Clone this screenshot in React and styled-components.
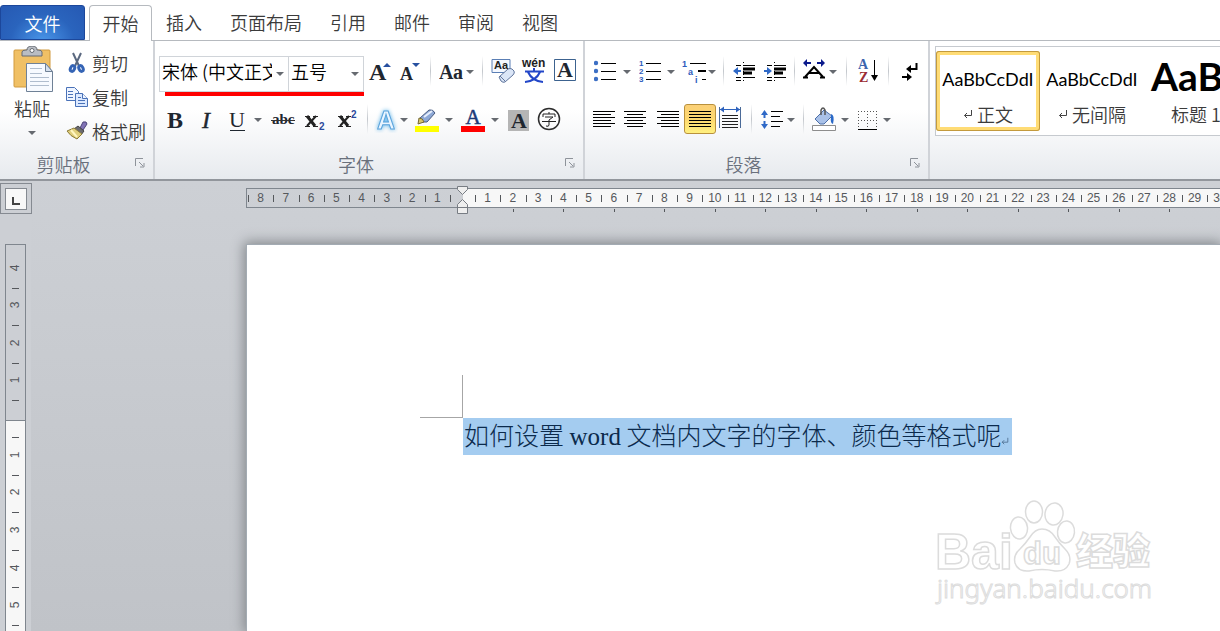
import React from 'react'
import styled, { createGlobalStyle, css } from 'styled-components'

const tabs = ['插入', '页面布局', '引用', '邮件', '审阅', '视图']
const leftUnits = [8, 7, 6, 5, 4, 3, 2, 1]
const rightUnits = Array.from({ length: 40 }, (_, i) => i + 1)
const stops = Array.from({ length: 20 }, (_, i) => i)

export default function App() {
  return (
    <Window>
      <GlobalStyle />
      <TabBar>
        <FileTab type="button">文件</FileTab>
        <ActiveTab type="button">开始</ActiveTab>
        {tabs.map((name) => (
          <Tab type="button" key={name}>
            {name}
          </Tab>
        ))}
      </TabBar>
      <Ribbon>
        <ClipboardGroup />
        <FontGroup />
        <ParagraphGroup />
        <StylesGroup />
      </Ribbon>
      <Workspace>
        <Sidebar>
          <TabSelector type="button" aria-label="制表符">
            <TabGlyph>
              <svg width="8" height="8">
                <path d="M1 0V7H8" fill="none" stroke="#444" strokeWidth="2" />
              </svg>
            </TabGlyph>
          </TabSelector>
          <VerticalRuler />
        </Sidebar>
        <Main>
          <HorizontalRuler />
          <Page>
            <CropMark />
            <Paragraph>
              <Selection>
                如何设置 <Latin>word</Latin> 文档内文字的字体、颜色等格式呢
                <ReturnMark size={8} color="#47688a" />
              </Selection>
            </Paragraph>
            <Watermark />
          </Page>
        </Main>
      </Workspace>
    </Window>
  )
}

function ClipboardGroup() {
  return (
    <Group $width={155}>
      <ClipboardBody>
        <PasteButton type="button">
          <PasteIcon />
          <span>粘贴</span>
          <Caret />
        </PasteButton>
        <CommandList>
          <Command type="button">
            <CutIcon />
            剪切
          </Command>
          <Command type="button">
            <CopyIcon />
            复制
          </Command>
          <Command type="button">
            <BrushIcon />
            格式刷
          </Command>
        </CommandList>
      </ClipboardBody>
      <GroupFooter title="剪贴板" />
    </Group>
  )
}

function FontGroup() {
  return (
    <Group $width={430}>
      <GroupBody>
        <ToolRow>
          <FontPickers>
            <Picker $width={130}>
              <select aria-label="字体">
                <option>宋体 (中文正文)</option>
              </select>
              <Caret />
            </Picker>
            <Picker $width={76}>
              <select aria-label="字号">
                <option>五号</option>
              </select>
              <Caret />
            </Picker>
          </FontPickers>
          <Tool $width={31} aria-label="增大字体">
            <Icon>
              <Glyph x="1" y="23" size="24">A</Glyph>
              <path d="M15 10l4-4 4 4z" fill="#2750a0" />
            </Icon>
          </Tool>
          <Tool $width={30} aria-label="缩小字体">
            <Icon>
              <Glyph x="2" y="23" size="18">A</Glyph>
              <path d="M14 6h8l-4 4z" fill="#2750a0" />
            </Icon>
          </Tool>
          <Separator $width={10} />
          <Tool $width={43} $gap={3} aria-label="更改大小写">
            <Icon>
              <Glyph x="0" y="22" size="20">A</Glyph>
              <Glyph x="14" y="22" size="20">a</Glyph>
            </Icon>
            <Caret />
          </Tool>
          <Separator $width={9} />
          <Tool $width={31} aria-label="清除格式">
            <Icon>
              <path d="M1 2.500h18v13H1z" fill="#f4f8ff" stroke="#5b7fb5" />
              <text x="3" y="12" fontSize="11" fontWeight="bold" fontFamily="Liberation Sans, sans-serif" fill="#222">
                Aa
              </text>
              <path d="M8 20l9-8q2-1 4 0l2 2q1 2-1 4l-8 7q-2 1-4-1z" fill="#dbe6f7" stroke="#60759c" />
              <path d="M9 19l5 5" stroke="#60759c" />
            </Icon>
          </Tool>
          <Tool $width={31} aria-label="拼音指南">
            <Icon w={26}>
              <text x="1" y="10" fontSize="12" fontWeight="bold" fontFamily="Liberation Sans, sans-serif" fill="#222">
                wén
              </text>
              <path d="M13 11v4M4 14.500h19M7 15q4 9 15 10M19 15q-4 9-15 10" fill="none" stroke="#2246c8" strokeWidth="2" />
            </Icon>
          </Tool>
          <Tool $width={32} aria-label="字符边框">
            <Icon>
              <path d="M1.500 2.500h21v21h-21z" fill="#fff" stroke="#3c628f" strokeWidth="1" />
              <Glyph x="4" y="20" size="22">A</Glyph>
            </Icon>
          </Tool>
        </ToolRow>
        <ToolRow $second>
          <Tool $width={32} aria-label="加粗">
            <Icon w={18}>
              <Glyph x="1" y="23" size="24">B</Glyph>
            </Icon>
          </Tool>
          <Tool $width={31} aria-label="倾斜">
            <Icon w={14}>
              <Glyph x="2" y="23" size="24" italic weight="normal">I</Glyph>
            </Icon>
          </Tool>
          <Tool $width={47} $gap={9} aria-label="下划线">
            <Icon w={16}>
              <Glyph x="0" y="22" size="22" weight="normal">U</Glyph>
              <path d="M1 25.500h15" stroke="#1f2730" />
            </Icon>
            <Caret />
          </Tool>
          <Tool $width={28} aria-label="删除线">
            <Icon>
              <Glyph x="1" y="19" size="15">abc</Glyph>
              <path d="M0 15.500h24" stroke="#333" />
            </Icon>
          </Tool>
          <Tool $width={32} aria-label="下标">
            <Icon>
              <CrossMark />
              <Small x="18" y="25">2</Small>
            </Icon>
          </Tool>
          <Tool $width={34} aria-label="上标">
            <Icon>
              <CrossMark />
              <Small x="17" y="13">2</Small>
            </Icon>
          </Tool>
          <Separator $width={8} />
          <Tool $width={40} $gap={2} aria-label="文本效果">
            <Icon>
              <GlowLetter x="12" y="24">A</GlowLetter>
            </Icon>
            <Caret />
          </Tool>
          <Tool $width={46} $gap={6} aria-label="突出显示">
            <Icon>
              <path d="M0 21h24v6H0z" fill="#ff0" />
              <path d="M4 17l1-4 9-8q4-1 6 3l-8 9z" fill="#8da8d6" stroke="#4a5c80" />
              <path d="M9 12l8-6" stroke="#e6eefc" strokeWidth="2" />
              <path d="M3 19l1-6q4 0 5 4z" fill="#d9c56a" stroke="#766a35" />
            </Icon>
            <Caret />
          </Tool>
          <Tool $width={45} $gap={6} aria-label="字体颜色">
            <Icon>
              <path d="M0 21h24v6H0z" fill="#f00" />
              <text x="12" y="19" textAnchor="middle" fontSize="21" fontFamily="Liberation Serif, serif" fill="#1c3a78" stroke="#1c3a78" strokeWidth=".5">
                A
              </text>
            </Icon>
            <Caret />
          </Tool>
          <Tool $width={33} aria-label="字符底纹">
            <Icon w={22}>
              <path d="M0 5h21v21H0z" fill="#b5b5b5" />
              <Glyph x="3" y="23" size="22">A</Glyph>
            </Icon>
          </Tool>
          <Tool $width={27} aria-label="带圈字符">
            <Icon>
              <circle cx="12" cy="14" r="10.500" fill="none" stroke="#2d2d2d" strokeWidth="1.500" />
              <path d="M12 7v2M6 12v-3h12v3M8 12h8l-4 3v5q0 2-3 1M5 16.500h14" fill="none" stroke="#222" />
            </Icon>
          </Tool>
        </ToolRow>
      </GroupBody>
      <GroupFooter title="字体" />
    </Group>
  )
}

function ParagraphGroup() {
  return (
    <Group $width={345}>
      <GroupBody>
        <ToolRow>
          <Tool $width={46} $gap={7} aria-label="项目符号">
            <Icon w={22}>
              {[6, 14, 22].map((y) => (
                <g key={y}>
                  <circle cx="2" cy={y} r="2.200" fill="#3c6fc4" />
                  <path d={`M7 ${y + 0.5}h15`} stroke="#000" />
                </g>
              ))}
            </Icon>
            <Caret />
          </Tool>
          <Tool $width={43} $gap={6} aria-label="编号">
            <Icon w={22}>
              {[6, 14, 22].map((y, i) => (
                <g key={y}>
                  <text x="0" y={y + 3} fontSize="8" fontWeight="bold" fontFamily="Liberation Sans, sans-serif" fill="#2d5bbd">
                    {i + 1}
                  </text>
                  <path d={`M7 ${y + 0.5}h15`} stroke="#000" />
                </g>
              ))}
            </Icon>
            <Caret />
          </Tool>
          <Tool $width={41} $gap={1} aria-label="多级列表">
            <Icon w={25}>
              <g fontSize="9" fontWeight="bold" fontFamily="Liberation Sans, sans-serif" fill="#2d5bbd">
                <text x="0" y="10">1</text>
                <text x="6" y="18">a</text>
                <text x="13" y="26">i</text>
              </g>
              <path d="M8 6.500h16M20 22.500h4" stroke="#000" />
              <path d="M16 14h8" stroke="#000" strokeWidth="2" />
            </Icon>
            <Caret />
          </Tool>
          <Separator $width={9} />
          <Tool $width={32} aria-label="减少缩进量">
            <Icon w={22}>
              <IndentLines />
              <path d="M0 14l5-4v3h3v2H5v3z" fill="#2f69c7" />
            </Icon>
          </Tool>
          <Tool $width={29} aria-label="增加缩进量">
            <Icon w={22}>
              <IndentLines />
              <path d="M8 14l-5-4v3H0v2h3v3z" fill="#2f69c7" />
            </Icon>
          </Tool>
          <Separator $width={10} />
          <Tool $width={42} $gap={4} aria-label="中文版式">
            <Icon w={22}>
              <path d="M0 6l4-4v3h4v2H4v3zM22 6l-4-4v3h-4v2h4v3z" fill="#0b1a8c" />
              <path d="M0 20.500h5M17 20.500h5M2 20L11 10L20 20M6 16h10" fill="none" stroke="#000" strokeWidth="2" />
            </Icon>
            <Caret />
          </Tool>
          <Separator $width={11} />
          <Tool $width={31} aria-label="排序">
            <Icon w={20}>
              <g fontSize="14" fontWeight="bold" fontFamily="Liberation Serif, serif">
                <text x="0" y="12" fill="#3c64ae">A</text>
                <text x="1" y="25" fill="#9b2c33">Z</text>
              </g>
              <path d="M16.500 3v18" stroke="#000" />
              <path d="M13 18h7l-3.500 6z" />
            </Icon>
          </Tool>
          <Separator $width={11} />
          <Tool $width={32} aria-label="显示编辑标记">
            <Icon w={16}>
              <path d="M14.500 6v6h-7" fill="none" stroke="#000" strokeWidth="2" />
              <path d="M4 12l5-4v8zM10 20l-5-4v8z" />
              <path d="M0 20h7" stroke="#000" strokeWidth="2" />
            </Icon>
          </Tool>
        </ToolRow>
        <ToolRow $second>
          <Tool $width={30} aria-label="左对齐">
            <AlignIcon d="M0 6.500h22M0 9.500h18M0 12.500h22M0 15.500h18M0 18.500h22M0 21.500h18" />
          </Tool>
          <Tool $width={32} aria-label="居中">
            <AlignIcon d="M0 6.500h22M3 9.500h16M0 12.500h22M3 15.500h16M0 18.500h22M3 21.500h16" />
          </Tool>
          <Tool $width={33} aria-label="右对齐">
            <AlignIcon d="M0 6.500h22M4 9.500h18M0 12.500h22M4 15.500h18M0 18.500h22M4 21.500h18" />
          </Tool>
          <Tool $width={32} $active aria-label="两端对齐" aria-pressed="true">
            <AlignIcon d="M0 6.500h22M0 9.500h22M0 12.500h22M0 15.500h22M0 18.500h22M0 21.500h22" />
          </Tool>
          <Tool $width={28} aria-label="分散对齐">
            <Icon w={22}>
              <path d="M.5 2v21M21.500 2v21" stroke="#4a6a98" />
              <path d="M3 10.500h16M3 13.500h16M3 16.500h16M3 19.500h16M3 22.500h16" stroke="#222" />
              <path d="M1 4.500h20" stroke="#2d62bd" />
              <path d="M1 4.500l4-3v6zM21 4.500l-4-3v6z" fill="#2d62bd" />
            </Icon>
          </Tool>
          <Separator $width={14} />
          <Tool $width={39} $gap={4} aria-label="行距">
            <Icon w={22}>
              <path d="M10 6.500h12M10 11.500h9M10 16.500h12M10 21.500h9" stroke="#000" />
              <path d="M3.500 5l3.500 5H4.500v3h-2v-3H0zM3.500 24L0 19h2.500v-3h2v3H7z" fill="#2f69c7" />
            </Icon>
            <Caret />
          </Tool>
          <Separator $width={12} />
          <Tool $width={43} $gap={5} aria-label="底纹">
            <Icon>
              <path d="M.5 20.500h23v5H.5z" fill="#fff" stroke="#8d8d8d" />
              <path d="M3 14l9-9 8 6-8 8H8z" fill="#a9c1e8" stroke="#4b6ea8" />
              <path d="M19 9q4 1 2 10-3-1-2-7z" fill="#2868c8" />
              <path d="M9 10V5q2-4 4 0v5" fill="none" stroke="#555" strokeWidth="1.500" />
            </Icon>
            <Caret />
          </Tool>
          <Tool $width={45} $gap={5} aria-label="边框">
            <Icon w={20}>
              <path d="M.5 6v18M9.500 6v18M18.500 6v18M0 6.500h20M0 15.500h20" stroke="#555" strokeDasharray="1 2" />
              <path d="M0 24.500h19" stroke="#000" />
            </Icon>
            <Caret />
          </Tool>
        </ToolRow>
      </GroupBody>
      <GroupFooter title="段落" />
    </Group>
  )
}

function StylesGroup() {
  return (
    <StylesArea>
      <Gallery>
        <StyleCard type="button" $selected>
          <Sample>AaBbCcDdI</Sample>
          <StyleName>
            <ReturnMark size={10} color="#444" /> 正文
          </StyleName>
        </StyleCard>
        <StyleCard type="button">
          <Sample>AaBbCcDdI</Sample>
          <StyleName>
            <ReturnMark size={10} color="#444" /> 无间隔
          </StyleName>
        </StyleCard>
        <StyleCard type="button">
          <Sample $heading>AaBb</Sample>
          <StyleName>标题 1</StyleName>
        </StyleCard>
      </Gallery>
    </StylesArea>
  )
}

function GroupFooter({ title }) {
  return (
    <Footer>
      <span>{title}</span>
      <Launcher type="button" aria-label={title}>
        <svg width="10" height="10" fill="none" stroke="#8e939a">
          <path d="M.5 8V.5H8M4 4l4 4M9 5v4H5" />
        </svg>
      </Launcher>
    </Footer>
  )
}

function HorizontalRuler() {
  return (
    <RulerArea>
      <RulerTrack>
        <RulerMargin>
          <Scale $count={8} $width={202}>
            {leftUnits.map((n) => (
              <Unit key={n}>{n}</Unit>
            ))}
          </Scale>
          <Unit $half />
        </RulerMargin>
        <RulerText>
          <Scale $count={40} $width={1010}>
            {rightUnits.map((n) => (
              <Unit key={n}>{n}</Unit>
            ))}
          </Scale>
        </RulerText>
      </RulerTrack>
      <Stops>
        {stops.map((n) => (
          <i key={n} />
        ))}
      </Stops>
      <IndentMarker width="13" height="30" fill="#eee" stroke="#777c83">
        <path d="M1.500 1.500h10v3l-5 5-5-5z" />
        <path d="M6.500 14.500l5 5v9h-10v-9zM1.500 22.500h10" />
      </IndentMarker>
    </RulerArea>
  )
}

function VerticalRuler() {
  return (
    <VRuler>
      <VMargin>
        <VScale $count={4} $height={150}>
          {[4, 3, 2, 1].map((n) => (
            <VUnit key={n}>
              <span>{n}</span>
            </VUnit>
          ))}
        </VScale>
      </VMargin>
      <VText>
        <VUnit $half />
        <VScale $count={5} $height={188}>
          {[1, 2, 3, 4, 5].map((n) => (
            <VUnit key={n}>
              <span>{n}</span>
            </VUnit>
          ))}
        </VScale>
      </VText>
    </VRuler>
  )
}

function Watermark() {
  return (
    <WatermarkArt width="226" height="112" viewBox="0 0 226 112">
      <g fill="#fff" stroke="#dcdcdc" strokeWidth="1.500">
        <text x="3" y="74" fontSize="50" fontWeight="bold" fontFamily="Liberation Sans, sans-serif">
          Bai
        </text>
        <ellipse cx="87" cy="33" rx="8.500" ry="11" transform="rotate(-6 87 33)" />
        <ellipse cx="102" cy="17" rx="8.500" ry="11" />
        <ellipse cx="122" cy="19" rx="9" ry="11" transform="rotate(8 122 19)" />
        <ellipse cx="134" cy="37" rx="8.500" ry="11" transform="rotate(6 134 37)" />
        <path d="M110 34q8 0 13 8 4 6 10 12 7 7 4 15-4 8-14 7-13-3-26 0-11 1-14-8-2-8 5-14 6-6 10-12 5-8 12-8z" />
        <text x="91" y="69" fontSize="31" fontWeight="bold" fontFamily="Liberation Sans, sans-serif">
          du
        </text>
        <text x="144" y="70" fontSize="37" fontWeight="900" fontFamily="Noto Sans CJK SC, sans-serif">
          经验
        </text>
        <text x="5" y="103" fontSize="26" fontFamily="Noto Sans, sans-serif" strokeWidth="1">
          jingyan.baidu.com
        </text>
      </g>
    </WatermarkArt>
  )
}

/* icons */

function Icon({ w = 24, children }) {
  return (
    <svg width={w} height="28" viewBox={`0 0 ${w} 28`} aria-hidden="true">
      {children}
    </svg>
  )
}

function AlignIcon({ d }) {
  return (
    <Icon w={22}>
      <path d={d} stroke="#000" />
    </Icon>
  )
}

function Glyph({ x, y, size, italic, weight = 'bold', children }) {
  return (
    <text
      x={x}
      y={y}
      fontSize={size}
      fontWeight={weight}
      fontStyle={italic ? 'italic' : 'normal'}
      fontFamily="Liberation Serif, serif"
      fill="#1f2730"
      stroke={italic ? '#1f2730' : 'none'}
      strokeWidth=".4"
    >
      {children}
    </text>
  )
}

function Small({ x, y, children }) {
  return (
    <text x={x} y={y} fontSize="10" fontWeight="bold" fontFamily="Liberation Sans, sans-serif" fill="#2c4a9c">
      {children}
    </text>
  )
}

function CrossMark() {
  return (
    <g stroke="#222">
      <path d="M6 11l8 10" strokeWidth="3" />
      <path d="M15 11L6 21" strokeWidth="2" />
      <path d="M4 11.500h5M12 11.500h5M4 21.500h5M12 21.500h5" />
    </g>
  )
}

function IndentLines() {
  return (
    <>
      <path d="M3 8.500h5M10 8.500h12M3 20.500h5M10 20.500h12M3 23.500h5" stroke="#000" />
      <path d="M10 12h12M10 16h9" stroke="#000" strokeWidth="3" />
      <path d="M10.500 5v21" stroke="#000" strokeDasharray="1 2" />
    </>
  )
}

function Caret() {
  return (
    <svg width="8" height="28" viewBox="0 0 8 28" aria-hidden="true">
      <path d="M0 13h8l-4 4z" fill="#666a70" />
    </svg>
  )
}

function ReturnMark({ size, color }) {
  return (
    <svg width={size} height={size} viewBox="0 0 10 10" fill="none" stroke={color} aria-hidden="true">
      <path d="M8.500 1v5.500H1.500M4 4L1.500 6.500 4 9" />
    </svg>
  )
}

function PasteIcon() {
  return (
    <svg width="46" height="48" viewBox="-4 0 46 48" aria-hidden="true">
      <rect x="1" y="4" width="36" height="37" rx="1" fill="#f0c065" stroke="#d19a3e" />
      <path d="M9 10V6q0-2 4-2h1q0-4 5-4t5 4h1q4 0 4 2v4z" fill="#b9bdc3" stroke="#666b73" />
      <circle cx="19" cy="4.500" r="2" fill="#fff" stroke="#666b73" />
      <path d="M13.500 17.500h19l7 8v20h-26z" fill="#f7faff" stroke="#6f8196" />
      <path d="M32.500 17.500v8h7z" fill="#d5dfec" stroke="#6f8196" />
      <path d="M17 22.500h12M17 27.500h12M17 31.500h19M17 35.500h19M17 39.500h19" stroke="#b0bdce" />
    </svg>
  )
}

function CutIcon() {
  return (
    <svg width="22" height="22" viewBox="0 0 22 22" aria-hidden="true">
      <path d="M7 1l6 13M15 1L9 14" stroke="#5b6980" strokeWidth="2" />
      <ellipse cx="6.500" cy="16.500" rx="2" ry="3" transform="rotate(25 6.500 16.500)" fill="#fff" stroke="#3564b5" strokeWidth="3" />
      <ellipse cx="15" cy="16.500" rx="2" ry="3" transform="rotate(-25 15 16.500)" fill="#fff" stroke="#3564b5" strokeWidth="3" />
    </svg>
  )
}

function CopyIcon() {
  return (
    <svg width="22" height="22" viewBox="0 0 22 22" fill="#eef4ff" stroke="#4a72b8" aria-hidden="true">
      <path d="M.5 1.500h8l4 4v9H.5z" />
      <path d="M2 5.500h5M2 8.500h5M2 11.500h5" />
      <path d="M9.500 7.500h7l5 5v8h-12z" fill="#dce9ff" />
      <path d="M16.500 7.500v5h5M12 11.500h3M12 14.500h7M12 17.500h7" />
    </svg>
  )
}

function BrushIcon() {
  return (
    <svg width="22" height="22" viewBox="0 0 22 22" aria-hidden="true">
      <path d="M14 8l3-6q4-1 4 2l-4 6z" fill="#8173b5" stroke="#4e4779" />
      <path d="M12 6l6 5-3 4-7-6z" fill="#6b6b70" stroke="#444" />
      <path d="M8 8l8 6-5 5Q4 16 1 11z" fill="#e0cf7c" stroke="#8b7b38" />
      <path d="M5 10l6 7" stroke="#fff6c0" strokeWidth="2" />
    </svg>
  )
}

/* styles */

const GlobalStyle = createGlobalStyle`
  * {
    box-sizing: border-box;
  }

  body {
    margin: 0;
    font-family: 'Noto Sans CJK SC', sans-serif;
    font-size: 18px;
    font-weight: 350;
    color: #3b3b3b;
  }

  button, select {
    margin: 0;
    padding: 0;
    border: 0;
    background: none;
    font: inherit;
    color: inherit;
  }

  svg {
    display: block;
    flex: none;
  }
`

const Window = styled.div`
  display: flex;
  flex-direction: column;
  height: 100vh;
  overflow: hidden;
  background: #fff;
`

const TabBar = styled.nav`
  display: flex;
  flex: none;
  padding-top: 5px;
  border-bottom: 1px solid #b6babf;
`

const Tab = styled.button`
  height: 35px;
  padding: 0 14px;
  line-height: 35px;
  white-space: nowrap;
`

const FileTab = styled(Tab)`
  width: 85px;
  margin-right: 4px;
  color: #fff;
  border: 1px solid #1c479b;
  border-radius: 3px 3px 0 0;
  background: radial-gradient(ellipse at 50% 110%, #4a97ea 0%, #2a64bd 55%, #2659b3 100%);
  line-height: 30px;
`

const ActiveTab = styled(Tab)`
  width: 63px;
  height: 36px;
  margin-bottom: -1px;
  padding: 0;
  border: 1px solid #b6babf;
  border-bottom: 0;
  border-radius: 4px 4px 0 0;
  background: #fff;
`

const Ribbon = styled.div`
  display: flex;
  flex: none;
  background: linear-gradient(#fff 50%, #e7eaee);
  border-bottom: 2px solid #92969c;
`

const Group = styled.section`
  display: flex;
  flex-direction: column;
  flex: none;
  width: ${(props) => props.$width}px;
  border-right: 2px solid #d0d3d8;
`

const GroupBody = styled.div`
  padding: 15px 0 0 4px;
`

const ToolRow = styled.div`
  display: flex;
  align-items: flex-start;
  height: ${(props) => (props.$second ? 30 : 36)}px;
  margin-top: ${(props) => (props.$second ? 12 : 0)}px;
`

const Tool = styled.button.attrs({ type: 'button' })`
  display: flex;
  align-items: center;
  justify-content: center;
  flex: none;
  gap: ${(props) => props.$gap || 0}px;
  width: ${(props) => props.$width}px;
  height: 30px;

  ${(props) =>
    props.$active &&
    css`
      border: 1px solid #b9913c;
      border-radius: 3px;
      background: linear-gradient(#fbd077, #fdd86f 50%, #fff07f);
    `}
`

const Separator = styled.span`
  flex: none;
  width: ${(props) => props.$width}px;
  height: 30px;
  background: linear-gradient(#fff0, #c3c7cc, #fff0) center / 1px 100% no-repeat;
`

const FontPickers = styled.div`
  position: relative;
  display: flex;
  width: 205px;

  &::after {
    content: '';
    position: absolute;
    left: 6px;
    right: 0;
    bottom: -4px;
    height: 4px;
    background: #f00;
  }
`

const Picker = styled.label`
  display: grid;
  width: ${(props) => props.$width}px;
  height: 36px;
  margin-right: -1px;
  border: 1px solid #d0d4d9;
  background: #fff;

  select {
    grid-area: 1 / 1;
    width: 100%;
    padding: 0 16px 6px 2px;
    appearance: none;
    color: #000;
    overflow: hidden;
    text-overflow: clip;
  }

  svg {
    grid-area: 1 / 1;
    justify-self: end;
    margin: 2px 4px 0 0;
    pointer-events: none;
  }
`

const GlowLetter = styled.text`
  font: bold 25px 'Liberation Sans', sans-serif;
  text-anchor: middle;
  fill: #eaf5ff;
  stroke: #5ba3dc;
  stroke-width: 1px;
  filter: drop-shadow(0 0 2px #5fb4e8);
`

const Footer = styled.div`
  display: flex;
  align-items: center;
  height: 28px;
  margin-top: auto;
  padding: 0 8px 2px 0;
  color: #69707c;

  span {
    flex: 1;
    padding-right: 8px;
    line-height: 26px;
    text-align: center;
  }
`

const Launcher = styled.button`
  display: flex;
  height: 12px;
`

const ClipboardBody = styled.div`
  display: flex;
  padding-top: 5px;
`

const PasteButton = styled.button`
  display: flex;
  flex-direction: column;
  align-items: center;
  width: 64px;
  height: 104px;
  line-height: 28px;

  span {
    margin-bottom: -4px;
  }
`

const CommandList = styled.div`
  display: flex;
  flex-direction: column;
`

const Command = styled.button`
  display: flex;
  align-items: center;
  gap: 4px;
  height: 34px;
  padding-left: 2px;
  white-space: nowrap;
`

const StylesArea = styled.section`
  flex: 1;
  min-width: 0;
  height: 138px;
  padding: 5px 0 0 5px;
`

const Gallery = styled.div`
  display: flex;
  height: 90px;
  padding-top: 4px;
  border: 1px solid #c6cacf;
  border-right: 0;
  background: #fff;
  overflow: hidden;
`

const StyleCard = styled.button`
  display: flex;
  flex-direction: column;
  align-items: center;
  flex: none;
  width: 104px;
  height: 80px;
  border-radius: 3px;

  ${(props) =>
    props.$selected &&
    css`
      background: #fff;
      box-shadow: inset 0 0 0 1px #c39a3d, inset 0 0 0 4px #ffdc75;
    `}
`

const Sample = styled.span`
  height: 50px;
  padding-left: ${(props) => (props.$heading ? 4 : 0)}px;
  line-height: ${(props) => (props.$heading ? 50 : 56)}px;
  font-family: Lato, sans-serif;
  font-size: ${(props) => (props.$heading ? 39 : 18)}px;
  font-weight: ${(props) => (props.$heading ? 700 : 400)};
  color: #000;
`

const StyleName = styled.span`
  display: flex;
  align-items: center;
  gap: 4px;
  line-height: 26px;
  white-space: nowrap;
`

const Workspace = styled.div`
  display: flex;
  flex: 1;
  min-height: 0;
  background: linear-gradient(#cdd0d5, #c0c3c8);
`

const Sidebar = styled.aside`
  display: flex;
  flex-direction: column;
  flex: none;
  width: 31px;
  padding-top: 2px;
  background: #cccfd4;
`

const TabSelector = styled.button`
  display: flex;
  align-items: center;
  justify-content: center;
  flex: none;
  width: 32px;
  height: 31px;
  border: 1px solid #858a91;
`

const TabGlyph = styled.span`
  display: flex;
  align-items: flex-end;
  justify-content: center;
  width: 22px;
  height: 22px;
  padding-bottom: 4px;
  border: 1px solid #858a91;
  background: #f8f8f8;
`

const Main = styled.main`
  flex: 1;
  min-width: 0;
  display: flex;
  flex-direction: column;
  overflow: hidden;
`

const RulerArea = styled.div`
  position: relative;
  flex: none;
  height: 63px;
  padding: 7px 0 0 215px;
`

const rulerFont = css`
  font-family: 'Liberation Sans', sans-serif;
  font-size: 12px;
  font-weight: 400;
  color: #55585c;
`

const RulerTrack = styled.div`
  display: flex;
  height: 20px;
  border: 1px solid #7f868e;
  border-right: 0;
  overflow: hidden;
  ${rulerFont}
`

const RulerMargin = styled.div`
  display: flex;
  justify-content: flex-end;
  flex: none;
  width: 216px;
`

const RulerText = styled.div`
  flex: 1;
  min-width: 0;
  padding-left: 12px;
  background: #f7f7f7;
`

const Scale = styled.div`
  display: grid;
  grid-template-columns: repeat(${(props) => props.$count}, 1fr);
  width: ${(props) => props.$width}px;
`

const Unit = styled.span`
  display: flex;
  align-items: center;
  justify-content: center;
  width: ${(props) => (props.$half ? '13px' : 'auto')};
  height: 18px;
  background: linear-gradient(#55585c, #55585c) left center / 1px 7px no-repeat;
`

const Stops = styled.div`
  display: grid;
  grid-template-columns: repeat(20, 1fr);
  width: 1010px;
  height: 3px;
  margin: 1px 0 0 217px;

  i {
    border-right: 1px solid #55585c;
  }
`

const IndentMarker = styled.svg`
  position: absolute;
  left: 425px;
  top: 4px;
`

const VRuler = styled.div`
  display: flex;
  flex-direction: column;
  flex: 1;
  min-height: 0;
  width: 21px;
  margin: 30px 0 0 5px;
  border: 1px solid #7f868e;
  border-bottom: 0;
  overflow: hidden;
  ${rulerFont}
`

const VMargin = styled.div`
  flex: none;
  height: 176px;
  padding-top: 6px;
  border-bottom: 1px solid #7f868e;
`

const VText = styled.div`
  flex: 1;
  background: #f7f7f7;
`

const VScale = styled.div`
  display: grid;
  grid-template-rows: repeat(${(props) => props.$count}, 1fr);
  height: ${(props) => props.$height}px;
`

const VUnit = styled.div`
  display: flex;
  align-items: center;
  justify-content: center;
  height: ${(props) => (props.$half ? '17px' : 'auto')};
  padding-bottom: 4px;
  background: linear-gradient(#55585c, #55585c) center bottom / 7px 1px no-repeat;

  span {
    transform: rotate(-90deg);
  }
`

const Page = styled.article`
  position: relative;
  flex: 1;
  margin-left: 215px;
  padding: 130px 0 0 173px;
  border: 1px solid #a3abb3;
  border-right: 0;
  border-bottom: 0;
  background: #fff;
  box-shadow: 0 0 12px 2px #84888c;
`

const CropMark = styled.div`
  width: 43px;
  height: 43px;
  border-right: 1px solid #a6a6a6;
  border-bottom: 1px solid #a6a6a6;
`

const Paragraph = styled.p`
  margin: 0 0 0 43px;
  font-size: 25px;
  font-weight: 300;
  line-height: 37px;
  color: #0b2a4c;
  white-space: nowrap;
`

const Selection = styled.span`
  display: inline-block;
  vertical-align: top;
  height: 37px;
  padding: 0 3px 0 1px;
  line-height: 33px;
  background: #a4ccf0;

  svg {
    display: inline-block;
  }
`

const Latin = styled.span`
  font-family: 'Liberation Serif', serif;
  line-height: 1;
  font-weight: 400;
`

const WatermarkArt = styled.svg`
  position: absolute;
  right: 62px;
  top: 250px;
`
